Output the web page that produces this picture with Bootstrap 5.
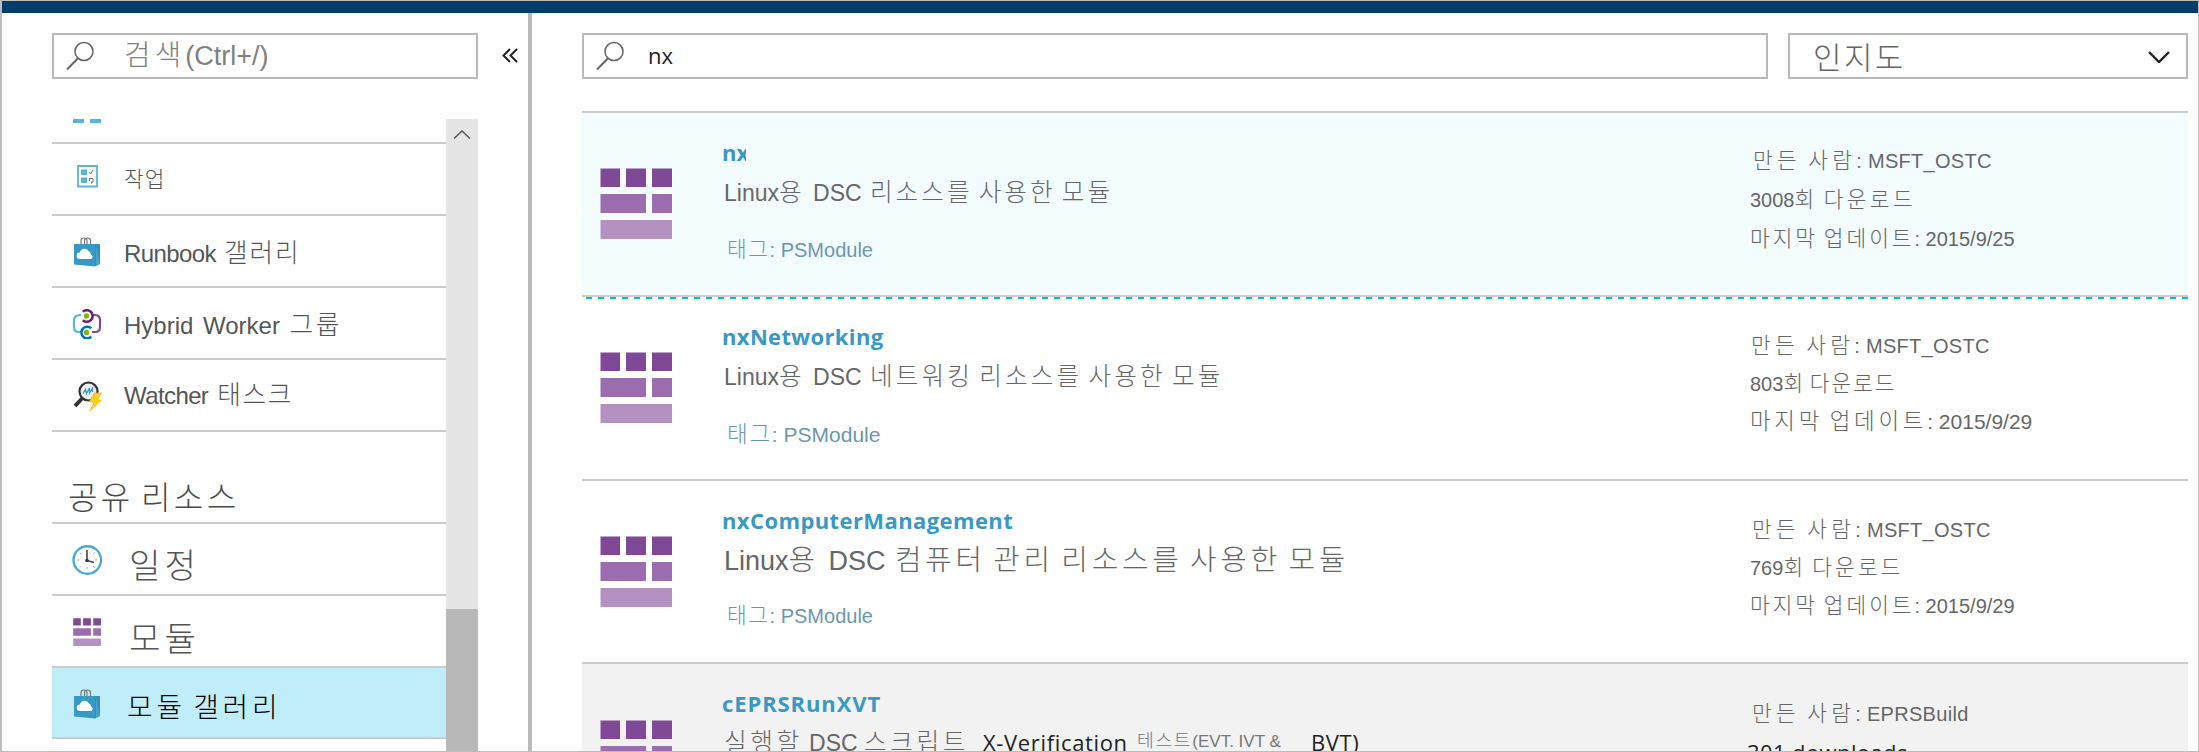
<!DOCTYPE html>
<html lang="ko">
<head>
<meta charset="utf-8">
<title>모듈 갤러리</title>
<link rel="stylesheet" href="https://cdn.jsdelivr.net/npm/bootstrap@5.3.0/dist/css/bootstrap.min.css">
<script src="https://cdn.jsdelivr.net/npm/bootstrap@5.3.0/dist/js/bootstrap.bundle.min.js"></script>
<style>
html,body{height:100%}
body{font-family:"Liberation Sans","Noto Sans CJK KR",sans-serif;color:#555;background:#fff;overflow:hidden}
.frame{height:752px;border:1px solid #bdbdbd;border-left-width:2px;overflow:hidden}
.topbar{height:12px;background:#003d6b}
.ln{line-height:30px;height:30px;white-space:nowrap}
.ko{font-weight:300;font-size:1.07em;line-height:1;letter-spacing:var(--ls,0);word-spacing:-.15em}
.side{width:526px;padding:20px 0 0 50px}
.side .ln,.ttl,.tag,.q1,.q2{margin-left:-1px}
.box{height:46px;border:2px solid #b9b9b9;background:#fff}
.side .box{width:426px}
.mag{width:28px;height:30px;margin:6px 0 0 12px}
.fold{width:16px;height:15px;margin:15px 0 0 24px}
.split{width:4px;background:#b9b9b9}
.menu-area{margin-top:40px}
.menu{width:394px}
.menu-row{height:72px;border-bottom:2px solid #ccc;padding:21px 0 0 20px}
.menu-row svg{width:30px;height:30px;flex:none}
.menu-row.first{height:25px;padding-top:0}
.menu-row.active{background:#bfeefa;color:#000;height:71px}
.heading{height:92px;border-bottom:2px solid #ccc;color:#4a4a4a;padding-top:49.5px}
.scroll{width:32px;background:#e5e5e5}
.thumb{height:142px;background:#b8b8b8;margin-top:459px}
.main-pane{padding:20px 10px 0 50px}
.pick{width:400px;margin-left:20px}
.chev{margin:16px 16px 0 0}
.results{margin-top:32px}
.item{height:184px;border-top:2px solid #ccc}
.item.hot{background:#f3fcff}
.item.last{background:#f2f2f2}
.item.dash{height:180px;border-top:0}
.item.short{height:183px}
.rule-hot{height:4px;border-top:2px solid #ccc;background:repeating-linear-gradient(90deg,#00bcf2 0 6px,transparent 6px 12px) 4px 0 / auto 2px no-repeat}
.tile{width:72px;height:71px;margin-left:18px}
.body-col{width:1000px;margin-left:51px}
.meta{margin-left:27px;color:#666;font-size:20px}
.ttl{font:bold 22px/30px "Open Sans","Noto Sans",sans-serif;color:#3999c6}
.desc{font-size:23px;color:#666;padding-left:1px;word-spacing:2px}
.tag{font-size:20px;color:#6b96b0;padding-left:5px}
.ui{font-family:"Open Sans","Noto Sans",sans-serif;color:#222}
/* sidebar labels */
.l1{font-size:27px;color:#808080;padding-left:31px;margin-top:6px;--ls:4.1px}
.l2,.l3,.l4,.l5{padding-left:23px}
.l2{font-size:20px;--ls:1px}
.l3,.l4,.l5{font-size:24px}
.l3{margin-top:2px;letter-spacing:-.6px;word-spacing:2px;--ls:1.9px}
.l4{margin-top:2px;word-spacing:3px;--ls:2.65px}
.l5{margin-top:-.5px;letter-spacing:-.6px;word-spacing:3px;--ls:1.6px}
.l6{font-size:30px;padding-left:17px;--ls:3.3px}
.l7,.l8{font-size:32px;padding-left:28px;margin-top:4px;--ls:4px}
.l8{margin-top:5px}
.l9{font-size:26px;padding-left:26px;margin-top:3.5px;--ls:3.8px}
/* filter bar */
.q1{font-size:22px;padding-left:25px;margin-top:5px}
.q2{font-size:29px;padding-left:24px;margin-top:8px;color:#666;--ls:2.4px}
/* gallery entries */
.t1{margin-top:55px}.t2{margin-top:53px}.t3{margin-top:55px}.t4{margin-top:56px}
.a1{margin-top:24px;width:24px;overflow:hidden}.a2{margin-top:11px;--ls:3px}.a3{margin-top:27px;--ls:1.6px}
.b1{margin-top:22px;letter-spacing:.35px}.b2{margin-top:11px;--ls:3.1px}.b3{margin-top:28px;font-size:21px;--ls:1.75px}
.c1{margin-top:24px;letter-spacing:.4px}.c2{margin-top:11px;font-size:27px;--ls:3.75px}.c3{margin-top:25px;--ls:1.6px}
.d1{margin-top:24px;letter-spacing:.9px}.dd{margin-top:10px}
.d2{width:260px;word-spacing:0;--ls:3.6px}
.d3{font-size:22px;width:154px;letter-spacing:.65px;margin-top:-1px}
.d4{font-size:17px;width:174px;color:#777;margin-top:-1px;--ls:1.7px}
.d5{font-size:22px;letter-spacing:.6px;margin-top:-1px}
.m1,.n1,.o1,.p1{letter-spacing:.3px;--ls:4.35px}
.m1{margin-top:32.6px;padding-left:3px}.m2{margin-top:9.5px;--ls:3.4px}.m3{margin-top:9px;--ls:3px}
.n1{margin-top:31.6px;padding-left:1px}.n2{margin-top:8px;--ls:2px}.n3{margin-top:8.6px;font-size:21px;--ls:3.7px}
.o1{margin-top:33.6px;padding-left:2px}.o2{margin-top:8px;--ls:3.2px}.o3{margin-top:8px;--ls:3px}
.p1{margin-top:34.6px;padding-left:2px}.p2{margin-top:8px;font-size:22px;letter-spacing:.4px;margin-left:-3px}
</style>
</head>
<body>
<svg width="0" height="0" class="position-absolute">
<symbol id="mag" viewBox="0 0 28 30"><circle cx="18" cy="10.500" r="9" fill="none" stroke="#666" stroke-width="1.600"/><path d="M11.800 17.500L1 28.500" stroke="#666" stroke-width="2"/></symbol>
<symbol id="mod" viewBox="0 0 72 71" preserveAspectRatio="none"><path fill="#804998" d="M.5.500h19.500v18.500H.5zM26 .5h20v18.500H26zM52 .5h20v18.500H52z"/><path fill="#9b6dae" d="M.5 26h45.500v19H.5zM52 26h20v19H52z"/><path fill="#b591c1" d="M.5 52h71.500v19H.5z"/></symbol>
<symbol id="bag" viewBox="0 0 30 30"><path d="M9 8V3.500Q9 1 12 1t3 2.500V8M12.500 8V3.500Q12.500 1 15.500 1t3 2.500V8" fill="none" stroke="#777" stroke-width="1.200"/><path d="M2 7h21v22.500L2 27.500z" fill="#3999c6"/><path d="M23 7h5v20l-5 2.500z" fill="#3390bb"/><path d="M24 8l4 19-4 2z" fill="#59b4d9" opacity=".5"/><path d="M8 22a3.300 3.300 0 010-6.600 4.800 4.800 0 019-1 3.500 3.500 0 012 3.300c2.500.8 2 4.300-.5 4.300z" fill="#fff"/></symbol>
</svg>
<div class="frame d-flex flex-column">
<div class="topbar flex-shrink-0"></div>
<div class="d-flex flex-grow-1">
<aside class="side flex-shrink-0">
  <div class="d-flex">
    <div class="box d-flex"><svg class="mag"><use href="#mag"/></svg><div class="ln l1"><span class="ko">검색</span>(Ctrl+/)</div></div>
    <svg class="fold" viewBox="0 0 16 15"><path d="M8 1L1.500 7.500 8 14M15 1L8.500 7.500 15 14" fill="none" stroke="#222" stroke-width="2"/></svg>
  </div>
  <div class="d-flex menu-area">
    <div class="menu">
      <div class="menu-row first"><svg viewBox="0 0 30 30"><path d="M1 0h11v4H1zM18 0h11v4H18z" fill="#59b4d9"/></svg></div>
      <div class="menu-row d-flex"><svg viewBox="0 0 30 30"><path d="M6 1h19v20.500H6z" fill="#fff" stroke="#59b4d9" stroke-width="1.800"/><path d="M9 4.500h6v5.500H9zM9 12.500h6V18H9z" fill="#59b4d9"/><path d="M17 7l1.500 2L21 5M17 13.500h4V17h-2m-1.500-1v-2.500M19 18.500l2-1.500" fill="none" stroke="#777"/></svg><div class="ln l2"><span class="ko">작업</span></div></div>
      <div class="menu-row d-flex"><svg><use href="#bag"/></svg><div class="ln l3">Runbook <span class="ko">갤러리</span></div></div>
      <div class="menu-row d-flex"><svg viewBox="0 0 30 30"><g fill="none" stroke-width="2.200"><path d="M9 6H7.500Q2 6.500 2 12v6q0 5 5 5h2" stroke="#59b4d9"/><path d="M20 6h3q5 0 5 5v7q0 5-5 5h-3" stroke="#804998"/><path d="M10.800 2.800A5.800 5.800 0 1110.800 11.200" stroke="#68217a" stroke-width="2.600"/><path d="M19.200 19.300A5.800 5.800 0 1019.200 27.700" stroke="#0072c6" stroke-width="2.600"/></g><circle cx="14.500" cy="7" r="2.700" fill="#7fba00"/><circle cx="14.500" cy="23.500" r="2.700" fill="#7fba00"/></svg><div class="ln l4">Hybrid Worker <span class="ko">그룹</span></div></div>
      <div class="menu-row d-flex"><svg viewBox="0 0 30 30"><circle cx="16.500" cy="10.500" r="9" fill="#e8eef2" stroke="#333" stroke-width="2.200"/><path d="M10.500 17L3 25" stroke="#333" stroke-width="4"/><path d="M11 12.500l2.500-4 1 4 3-5.500v5l3-5v4" fill="none" stroke="#3999c6" stroke-width="1.300"/><path d="M22.500 12h7l-4 7h4L18 30l4-9h-5z" fill="#fcd116" stroke="#f2a51c" stroke-width=".6"/></svg><div class="ln l5">Watcher <span class="ko">태스크</span></div></div>
      <div class="heading"><div class="ln l6"><span class="ko">공유 리소스</span></div></div>
      <div class="menu-row d-flex"><svg viewBox="0 0 30 30"><circle cx="15.300" cy="15" r="13.800" fill="#fff" stroke="#4aa9d3" stroke-width="2.400"/><path d="M15 5v10.500l7 2" fill="none" stroke="#444" stroke-width="1.600"/><circle cx="15" cy="15.500" r="1.800" fill="#333"/><path d="M15 22v2M5.500 15h2M23 15h2M8 8l1.300 1.300M22.500 7.500L21.200 8.800M8 22.500l1.300-1.300M22.500 22.500l-1.300-1.300" stroke="#999"/></svg><div class="ln l7"><span class="ko">일정</span></div></div>
      <div class="menu-row d-flex"><svg viewBox="-1 -1 30 30"><use href="#mod" width="28" height="28"/></svg><div class="ln l8"><span class="ko">모듈</span></div></div>
      <div class="menu-row d-flex active"><svg><use href="#bag"/></svg><div class="ln l9"><span class="ko">모듈 갤러리</span></div></div>
    </div>
    <div class="scroll"><svg width="32" height="31" class="d-block" viewBox="0 0 32 31"><path d="M8 19.500l8-7.500 8 7.500" fill="none" stroke="#555" stroke-width="1.500"/></svg><div class="thumb"></div></div>
  </div>
</aside>
<div class="split flex-shrink-0"></div>
<main class="main-pane flex-grow-1">
  <div class="d-flex">
    <div class="box d-flex flex-grow-1"><svg class="mag"><use href="#mag"/></svg><div class="ln ui q1">nx</div></div>
    <div class="box pick d-flex justify-content-between"><div class="ln q2"><span class="ko">인지도</span></div><svg class="chev" width="22" height="12" viewBox="0 0 22 12"><path d="M1 1l10 10L21 1" fill="none" stroke="#222" stroke-width="2.400"/></svg></div>
  </div>
  <div class="results">
    <div class="item hot d-flex">
      <svg class="tile t1"><use href="#mod"/></svg>
      <div class="body-col"><div class="ln ttl a1">nx</div><div class="ln desc a2">Linux<span class="ko">용</span> DSC <span class="ko">리소스를 사용한 모듈</span></div><div class="ln tag a3"><span class="ko">태그</span>: PSModule</div></div>
      <div class="meta"><div class="ln m1"><span class="ko">만든 사람</span>: MSFT_OSTC</div><div class="ln m2">3008<span class="ko">회 다운로드</span></div><div class="ln m3"><span class="ko">마지막 업데이트</span>: 2015/9/25</div></div>
    </div>
    <div class="rule-hot"></div>
    <div class="item dash d-flex">
      <svg class="tile t2"><use href="#mod"/></svg>
      <div class="body-col"><div class="ln ttl b1">nxNetworking</div><div class="ln desc b2">Linux<span class="ko">용</span> DSC <span class="ko">네트워킹 리소스를 사용한 모듈</span></div><div class="ln tag b3"><span class="ko">태그</span>: PSModule</div></div>
      <div class="meta"><div class="ln n1"><span class="ko">만든 사람</span>: MSFT_OSTC</div><div class="ln n2">803<span class="ko">회 다운로드</span></div><div class="ln n3"><span class="ko">마지막 업데이트</span>: 2015/9/29</div></div>
    </div>
    <div class="item short d-flex">
      <svg class="tile t3"><use href="#mod"/></svg>
      <div class="body-col"><div class="ln ttl c1">nxComputerManagement</div><div class="ln desc c2">Linux<span class="ko">용</span> DSC <span class="ko">컴퓨터 관리 리소스를 사용한 모듈</span></div><div class="ln tag c3"><span class="ko">태그</span>: PSModule</div></div>
      <div class="meta"><div class="ln o1"><span class="ko">만든 사람</span>: MSFT_OSTC</div><div class="ln o2">769<span class="ko">회 다운로드</span></div><div class="ln o3"><span class="ko">마지막 업데이트</span>: 2015/9/29</div></div>
    </div>
    <div class="item last d-flex">
      <svg class="tile t4"><use href="#mod"/></svg>
      <div class="body-col"><div class="ln ttl d1">cEPRSRunXVT</div><div class="d-flex dd"><div class="ln desc d2"><span class="ko">실행할</span> DSC <span class="ko">스크립트</span></div><div class="ln ui d3">X-Verification</div><div class="ln d4"><span class="ko">테스트</span>(EVT. IVT &amp;</div><div class="ln ui d5">BVT)</div></div></div>
      <div class="meta"><div class="ln p1"><span class="ko">만든 사람</span>: EPRSBuild</div><div class="ln ui p2">301 downloads</div></div>
    </div>
  </div>
</main>
</div>
</div>
</body>
</html>
